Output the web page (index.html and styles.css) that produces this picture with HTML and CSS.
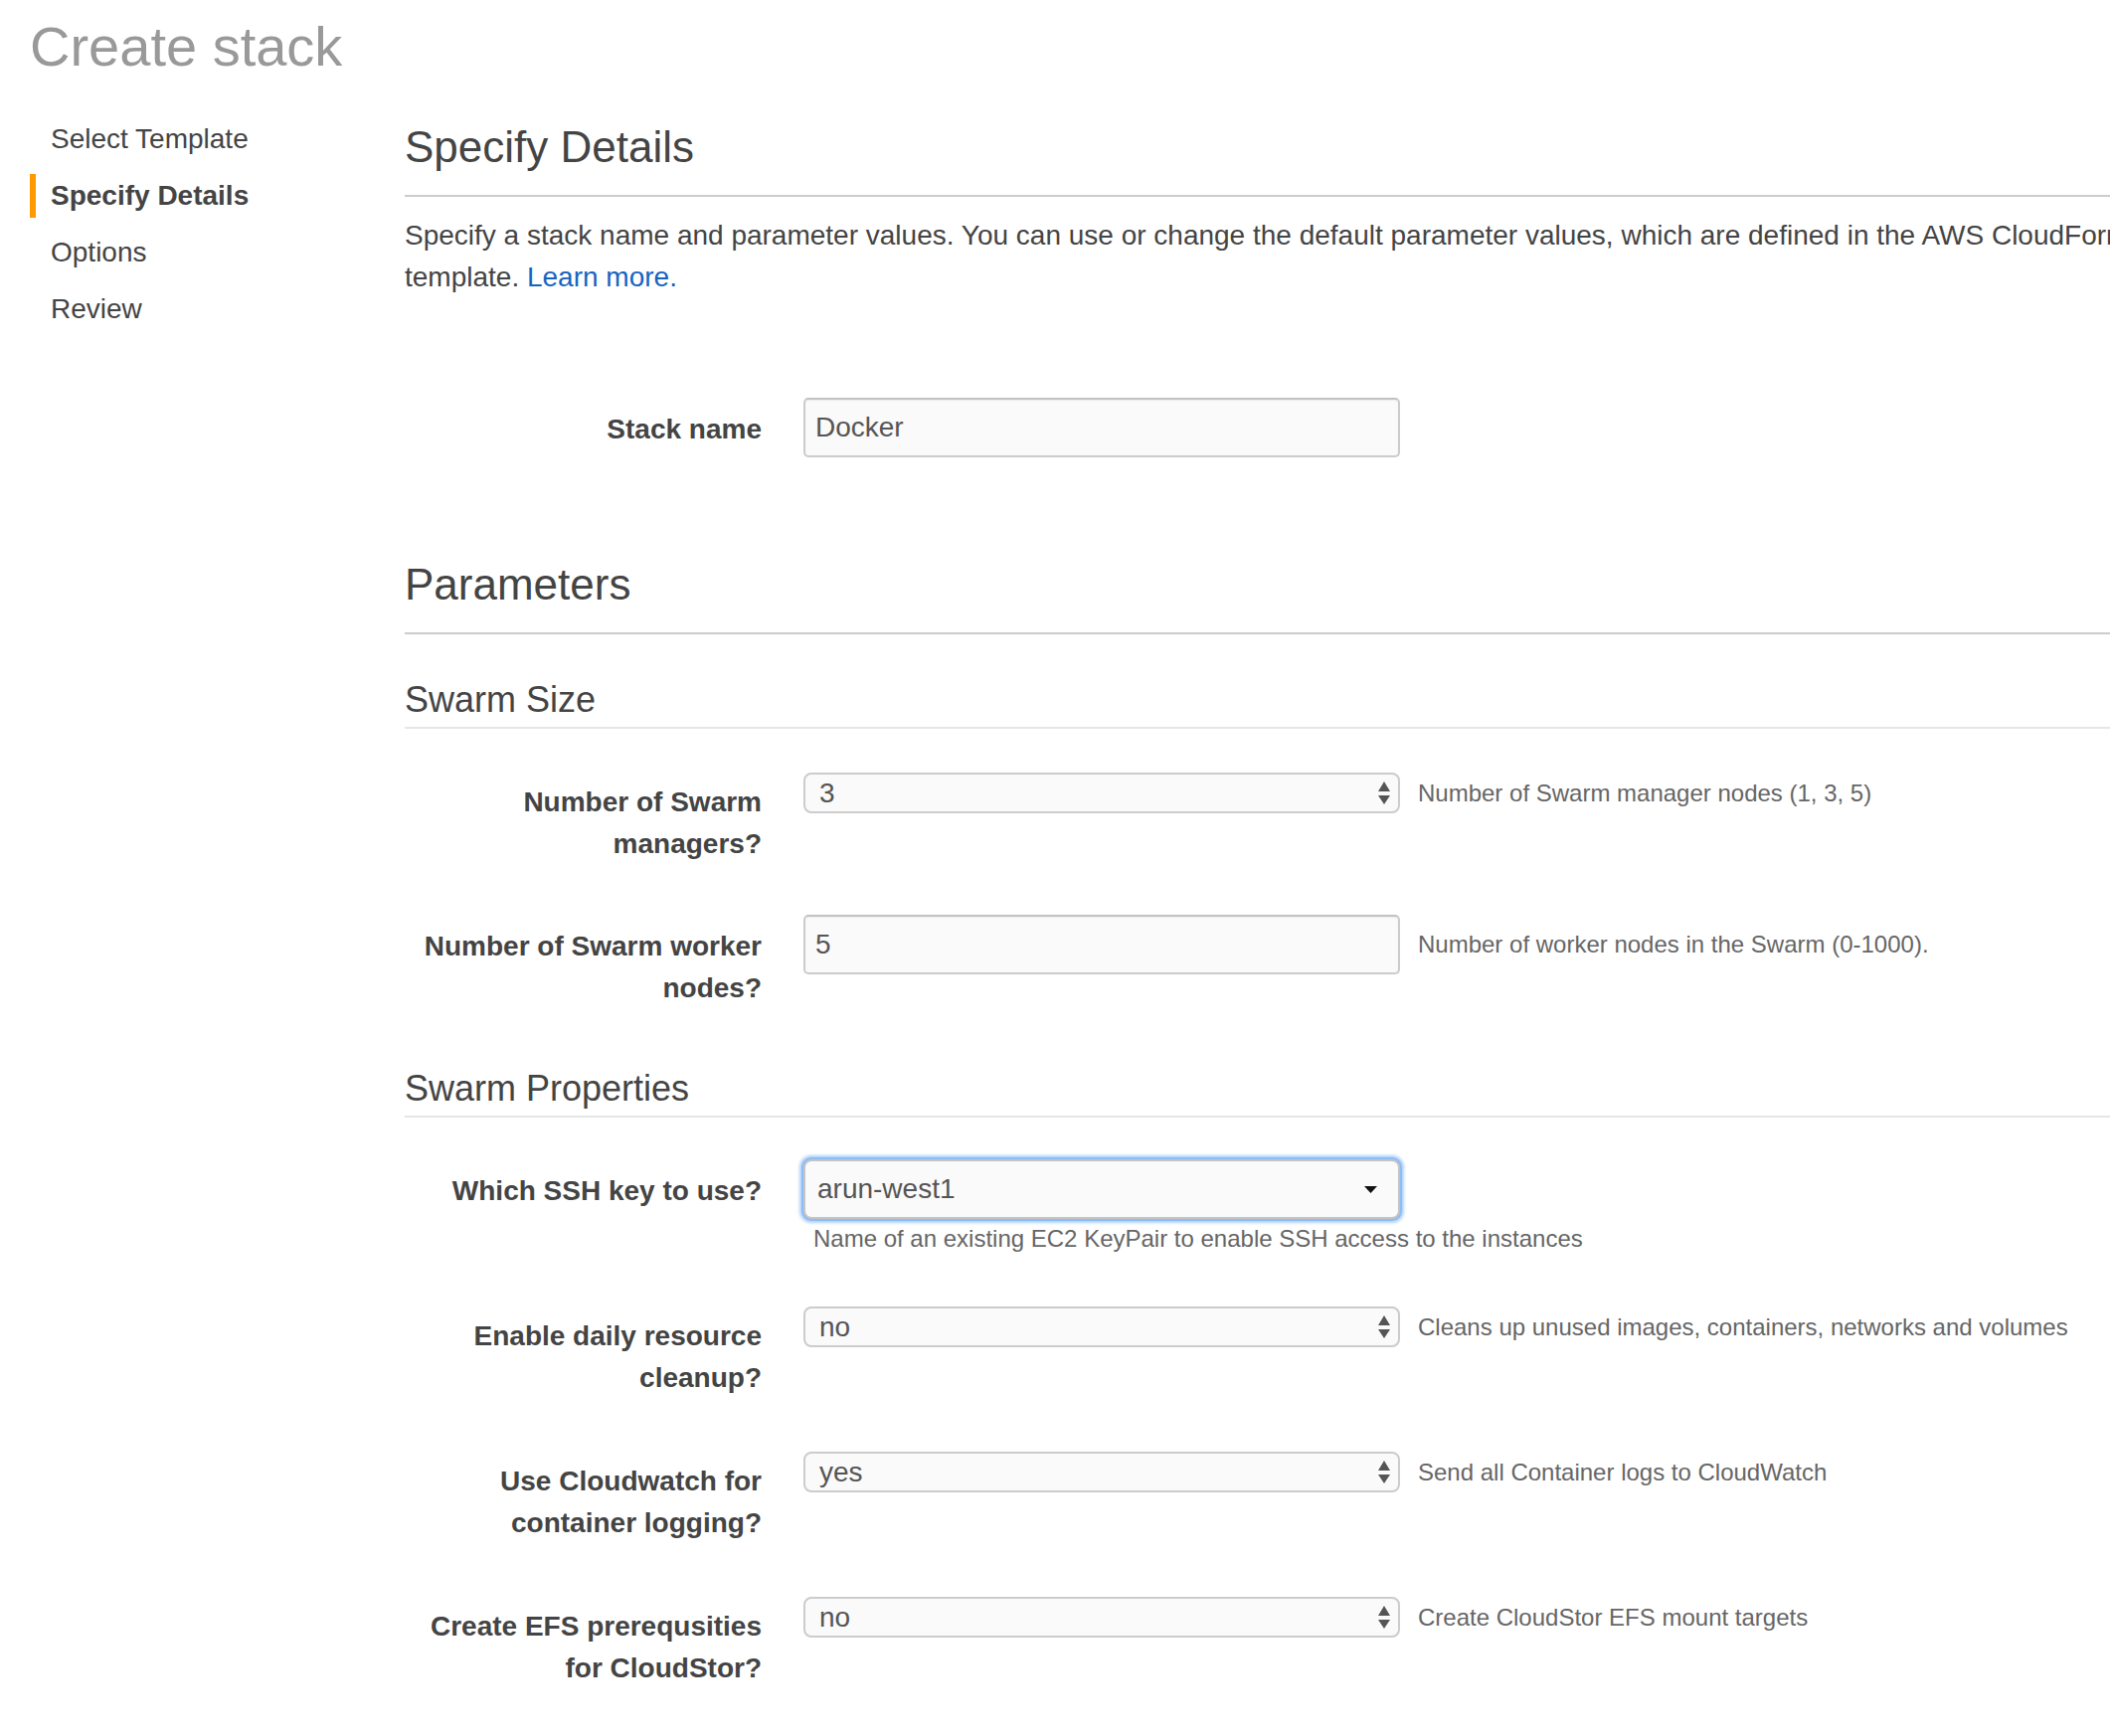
FILE: index.html
```html
<!DOCTYPE html>
<html lang="en">
<head>
<meta charset="utf-8">
<title>Create stack</title>
<link rel="stylesheet" href="styles.css">
</head>
<body>
<div class="page">
  <h1 class="page-title">Create stack</h1>
  <div class="layout">
    <nav class="steps">
      <ul class="step-list">
        <li class="step">Select Template</li>
        <li class="step step-active">Specify Details</li>
        <li class="step">Options</li>
        <li class="step">Review</li>
      </ul>
    </nav>
    <main class="content">
      <h2 class="section-title first">Specify Details</h2>
      <hr class="rule">
      <p class="intro">Specify a stack name and parameter values. You can use or change the default parameter values, which are defined in the AWS CloudFormation template. <a class="link" href="#">Learn more.</a></p>

      <div class="row row-lg stack-row">
        <label class="row-label">Stack name</label>
        <div class="row-control">
          <div class="field"><div class="input"><span class="value">Docker</span></div></div>
        </div>
      </div>

      <h2 class="section-title params">Parameters</h2>
      <hr class="rule">

      <h3 class="sub-title first-sub">Swarm Size</h3>
      <hr class="sub-rule">

      <div class="row row-tight">
        <label class="row-label">Number of Swarm managers?</label>
        <div class="row-control">
          <div class="field">
            <div class="select">
              <span class="value">3</span>
              <svg class="spinner" width="12" height="23" viewBox="0 0 12 23"><polygon points="0,10 6,0 12,10" fill="#555"/><polygon points="0,14 12,14 6,23" fill="#555"/></svg>
            </div>
            <span class="help">Number of Swarm manager nodes (1, 3, 5)</span>
          </div>
        </div>
      </div>

      <div class="row row-lg">
        <label class="row-label">Number of Swarm worker nodes?</label>
        <div class="row-control">
          <div class="field">
            <div class="input"><span class="value">5</span></div>
            <span class="help">Number of worker nodes in the Swarm (0-1000).</span>
          </div>
        </div>
      </div>

      <h3 class="sub-title">Swarm Properties</h3>
      <hr class="sub-rule sub-rule-tight">

      <div class="row row-lg">
        <label class="row-label">Which SSH key to use?</label>
        <div class="row-control">
          <div class="field">
            <div class="select select-focus">
              <span class="value">arun-west1</span>
              <svg class="caret" width="13" height="7" viewBox="0 0 13 7"><polygon points="0,0 13,0 6.5,7" fill="#111"/></svg>
            </div>
          </div>
          <div class="help-block">Name of an existing EC2 KeyPair to enable SSH access to the instances</div>
        </div>
      </div>

      <div class="row">
        <label class="row-label">Enable daily resource cleanup?</label>
        <div class="row-control">
          <div class="field">
            <div class="select">
              <span class="value">no</span>
              <svg class="spinner" width="12" height="23" viewBox="0 0 12 23"><polygon points="0,10 6,0 12,10" fill="#555"/><polygon points="0,14 12,14 6,23" fill="#555"/></svg>
            </div>
            <span class="help">Cleans up unused images, containers, networks and volumes</span>
          </div>
        </div>
      </div>

      <div class="row">
        <label class="row-label">Use Cloudwatch for container logging?</label>
        <div class="row-control">
          <div class="field">
            <div class="select">
              <span class="value">yes</span>
              <svg class="spinner" width="12" height="23" viewBox="0 0 12 23"><polygon points="0,10 6,0 12,10" fill="#555"/><polygon points="0,14 12,14 6,23" fill="#555"/></svg>
            </div>
            <span class="help">Send all Container logs to CloudWatch</span>
          </div>
        </div>
      </div>

      <div class="row">
        <label class="row-label">Create EFS prerequsities for CloudStor?</label>
        <div class="row-control">
          <div class="field">
            <div class="select">
              <span class="value">no</span>
              <svg class="spinner" width="12" height="23" viewBox="0 0 12 23"><polygon points="0,10 6,0 12,10" fill="#555"/><polygon points="0,14 12,14 6,23" fill="#555"/></svg>
            </div>
            <span class="help">Create CloudStor EFS mount targets</span>
          </div>
        </div>
      </div>
    </main>
  </div>
</div>
</body>
</html>
```

FILE: styles.css
```css
html, body {
  margin: 0;
  padding: 0;
  background: #ffffff;
  overflow: hidden;
}

body {
  font-family: "Liberation Sans", Arial, Helvetica, sans-serif;
  font-size: 28px;
  color: #444444;
}

.page {
  padding-left: 30px;
}

.page-title {
  margin: 15px 0 39px 0;
  font-size: 56px;
  line-height: 64px;
  font-weight: normal;
  color: #999999;
}

.layout {
  display: flex;
  align-items: flex-start;
}

.steps {
  width: 377px;
  flex: none;
}

.step-list {
  list-style: none;
  margin: 0;
  padding: 0;
}

.step {
  height: 44px;
  line-height: 44px;
  margin-bottom: 13px;
  padding-left: 21px;
  color: #444444;
}

.step-active {
  font-weight: bold;
  border-left: 6px solid #ff9900;
  padding-left: 15px;
}

.content {
  width: 1860px;
  flex: none;
}

.section-title {
  margin: 0 0 24px 0;
  font-size: 44px;
  line-height: 48px;
  font-weight: normal;
  color: #444444;
}

.section-title.first {
  margin-top: 6px;
}

.section-title.params {
  margin-top: 104px;
}

.rule {
  border: none;
  height: 2px;
  background: #cccccc;
  margin: 0;
}

.intro {
  margin: 18px 0 0 0;
  line-height: 42px;
  color: #444444;
}

.link {
  color: #1764c0;
  text-decoration: none;
}

.sub-title {
  margin: 60px 0 7px 0;
  font-size: 36px;
  line-height: 40px;
  font-weight: normal;
  color: #444444;
}

.sub-title.first-sub {
  margin-top: 46px;
}

.sub-rule {
  border: none;
  height: 2px;
  background: #e6e6e6;
  margin: 0 0 44px 0;
}

.sub-rule-tight {
  margin-bottom: 42px;
}

.row {
  display: flex;
  align-items: flex-start;
  margin-bottom: 53px;
}

.row-tight {
  margin-bottom: 50px;
}

.stack-row {
  margin-top: 100px;
  margin-bottom: 0;
}

.row-label {
  width: 359px;
  flex: none;
  padding: 9px 42px 0 0;
  text-align: right;
  font-weight: bold;
  line-height: 42px;
  color: #444444;
}

.row-lg .row-label {
  padding-top: 11px;
}

.row-control {
  flex: none;
}

.field {
  display: flex;
  align-items: center;
}

.input {
  width: 600px;
  height: 60px;
  box-sizing: border-box;
  border: 2px solid #cccccc;
  border-top-color: #c2c2c2;
  border-radius: 5px;
  background: #fafafa;
  box-shadow: inset 0 1px 2px rgba(0, 0, 0, 0.06);
  padding-left: 10px;
  display: flex;
  align-items: center;
  color: #555555;
}

.select {
  width: 600px;
  height: 41px;
  box-sizing: border-box;
  border: 2px solid #cccccc;
  border-radius: 8px;
  background: #fafafa;
  padding: 0 8px 0 14px;
  display: flex;
  align-items: center;
  color: #555555;
}

.select .value {
  flex: 1;
}

.spinner {
  flex: none;
  display: block;
}

.select-focus {
  height: 60px;
  border-color: #c4c4c4;
  padding: 0 21px 0 12px;
  box-shadow: 0 0 0 2px #8dbdf6, 0 0 3px 4px rgba(110, 170, 245, 0.55);
}

.caret {
  flex: none;
  display: block;
}

.help {
  margin-left: 18px;
  font-size: 24px;
  color: #666666;
  white-space: nowrap;
}

.help-block {
  margin: 4px 0 0 10px;
  font-size: 24px;
  line-height: 31px;
  color: #666666;
  white-space: nowrap;
}
```
